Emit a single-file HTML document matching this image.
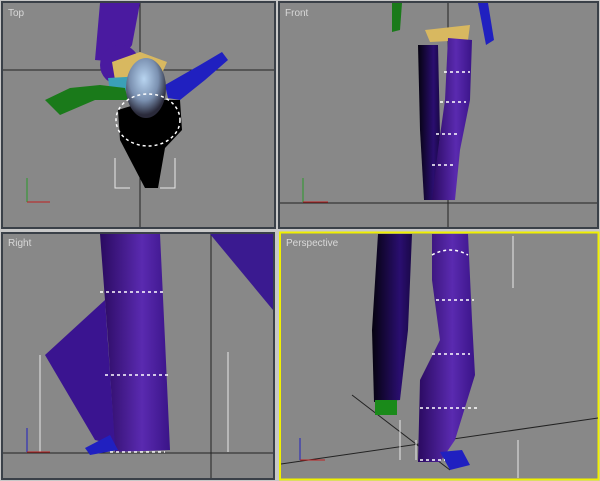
<!DOCTYPE html>
<html><head><meta charset="utf-8"><style>
html,body{margin:0;padding:0;background:#c8c8c8;width:600px;height:481px;overflow:hidden}
svg{display:block}
text{font-family:"Liberation Sans",sans-serif;font-size:10px;fill:#d8d8d8}
.m{stroke:#fff;stroke-width:1.5;fill:none;stroke-dasharray:3 3}
</style></head><body>
<svg width="600" height="481" viewBox="0 0 600 481" xmlns="http://www.w3.org/2000/svg">
<defs>
<linearGradient id="leg" x1="0" x2="1"><stop offset="0" stop-color="#2a0a60"/><stop offset=".6" stop-color="#5a2ab0"/><stop offset="1" stop-color="#3a1488"/></linearGradient>
<linearGradient id="legd" x1="0" x2="1"><stop offset="0" stop-color="#05020f"/><stop offset=".7" stop-color="#2a0e70"/><stop offset="1" stop-color="#1a0848"/></linearGradient>
<radialGradient id="head" cx=".45" cy=".35" r=".6"><stop offset="0" stop-color="#b8d4f0"/><stop offset=".6" stop-color="#7a90b0"/><stop offset="1" stop-color="#2a2a3a"/></radialGradient>
</defs>
<!-- TL -->
<rect x="2" y="2" width="273" height="226" fill="#888" stroke="#3a4048" stroke-width="2"/>
<line x1="3" y1="70" x2="274" y2="70" stroke="#222"/><line x1="140" y1="3" x2="140" y2="227" stroke="#222"/>
<path d="M100 3 L140 3 L132 45 L120 62 L95 60 Z" fill="#4a1aa0"/>
<circle cx="120" cy="65" r="20" fill="#4a1aa0"/>
<path d="M112 62 L140 52 L167 62 L160 78 L115 80 Z" fill="#d8b860"/>
<path d="M108 78 L160 75 L165 88 L110 92 Z" fill="#3aa0b8"/>
<path d="M165 85 L200 65 L222 52 L228 60 L205 80 L180 100 L168 98 Z" fill="#2020c0"/>
<path d="M45 100 L70 88 L100 85 L125 88 L128 100 L95 100 L60 115 Z" fill="#1a7a1a"/>
<path d="M118 110 L150 100 L180 100 L182 130 L165 148 L158 188 L145 188 L120 140 Z" fill="#000"/>
<ellipse cx="146" cy="88" rx="20" ry="30" fill="url(#head)"/>
<ellipse cx="148" cy="120" rx="32" ry="26" class="m"/>
<path d="M115 158 V188 H130 M175 158 V188 H160" stroke="#e8e8e8" fill="none"/>
<line x1="27" y1="202" x2="27" y2="178" stroke="#2a9a2a"/><line x1="27" y1="202" x2="50" y2="202" stroke="#c02020"/>
<text x="8" y="16">Top</text>
<!-- TR -->
<rect x="279" y="2" width="319" height="226" fill="#888" stroke="#3a4048" stroke-width="2"/>
<line x1="280" y1="203" x2="597" y2="203" stroke="#222"/><line x1="448" y1="3" x2="448" y2="227" stroke="#222"/>
<path d="M392 3 L402 3 L400 30 L392 32 Z" fill="#1a7a1a"/>
<path d="M478 3 L488 3 L494 40 L486 45 Z" fill="#2020c0"/>
<path d="M425 30 L470 25 L468 40 L430 42 Z" fill="#d8b860"/>
<path d="M418 45 L438 45 L440 135 L434 200 L424 200 L420 130 Z" fill="url(#legd)"/>
<path d="M448 38 L472 40 L470 100 L460 150 L455 200 L432 200 L438 150 L445 100 Z" fill="url(#leg)"/>
<path d="M444 72 H470 M440 102 H466 M436 134 H460 M432 165 H456" class="m"/>
<line x1="303" y1="202" x2="303" y2="178" stroke="#2a9a2a"/><line x1="303" y1="202" x2="328" y2="202" stroke="#c02020"/>
<text x="285" y="16">Front</text>
<!-- BL -->
<rect x="2" y="233" width="272" height="246" fill="#888" stroke="#3a4048" stroke-width="2"/>
<line x1="3" y1="453" x2="273" y2="453" stroke="#222"/><line x1="211" y1="234" x2="211" y2="478" stroke="#222"/>
<path d="M100 234 L160 234 L165 340 L170 450 L115 452 L108 340 Z" fill="url(#leg)"/>
<path d="M105 300 L45 355 L95 440 L115 445 Z" fill="#3a1490"/>
<path d="M210 234 L273 234 L273 310 Z" fill="#3a1a90"/>
<path d="M85 448 L110 435 L118 450 L90 455 Z" fill="#2020c0"/>
<path d="M100 292 H165 M105 375 H170 M110 452 H165" class="m"/>
<path d="M40 355 V452 M228 352 V452" stroke="#e8e8e8"/>
<line x1="27" y1="452" x2="27" y2="428" stroke="#2020c0"/><line x1="27" y1="452" x2="50" y2="452" stroke="#c02020"/>
<text x="8" y="246">Right</text>
<!-- BR -->
<rect x="280" y="232.5" width="318.5" height="247" fill="#888" stroke="#f0f000" stroke-width="2"/>
<line x1="281" y1="464" x2="598" y2="418" stroke="#222"/>
<line x1="352" y1="395" x2="450" y2="470" stroke="#222"/>
<path d="M378 234 L412 234 L408 330 L400 400 L374 402 L372 330 Z" fill="url(#legd)"/>
<rect x="375" y="400" width="22" height="15" fill="#1a8a1a"/>
<path d="M432 234 L468 234 L472 320 L475 375 L455 440 L440 462 L418 462 L420 380 L440 340 L432 280 Z" fill="url(#leg)"/>
<path d="M440 452 L462 450 L470 465 L450 470 Z" fill="#2020c0"/>
<path d="M432 255 Q450 245 468 255 M436 300 H474 M432 354 H470 M420 408 H478 M420 460 H445" class="m"/>
<path d="M513 236 V288 M518 440 V478 M400 420 V460 M416 440 V460" stroke="#e8e8e8"/>
<line x1="300" y1="460" x2="300" y2="438" stroke="#2020c0"/><line x1="300" y1="460" x2="325" y2="460" stroke="#c02020"/>
<text x="286" y="246">Perspective</text>
</svg>
</body></html>
